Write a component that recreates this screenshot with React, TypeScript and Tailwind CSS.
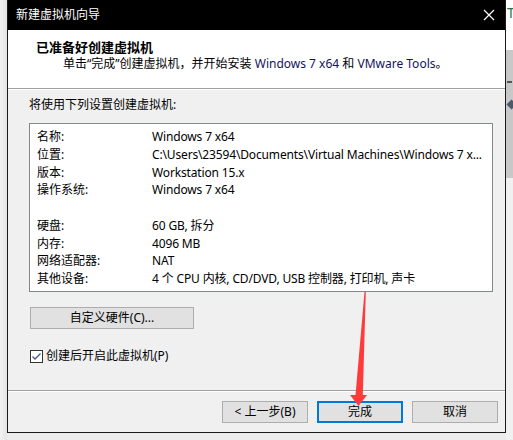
const FONT = "font-['Segoe_UI','Noto_Sans','Noto_Sans_CJK_SC',sans-serif]";

const SETTINGS: { label: string; value: string }[] = [
  { label: "名称:", value: "Windows 7 x64" },
  { label: "位置:", value: "C:\\Users\\23594\\Documents\\Virtual Machines\\Windows 7 x..." },
  { label: "版本:", value: "Workstation 15.x" },
  { label: "操作系统:", value: "Windows 7 x64" },
  { label: "", value: "" },
  { label: "硬盘:", value: "60 GB, 拆分" },
  { label: "内存:", value: "4096 MB" },
  { label: "网络适配器:", value: "NAT" },
  { label: "其他设备:", value: "4 个 CPU 内核, CD/DVD, USB 控制器, 打印机, 声卡" },
];

function WinButton({ children, primary, className = "" }: { children: React.ReactNode; primary?: boolean; className?: string }) {
  return (
    <div
      className={
        "h-[22px] flex items-center justify-center bg-[#e1e1e1] text-[12px] text-black " +
        (primary ? "border-2 border-[#0078d7] " : "border border-[#adadad] ") +
        className
      }
    >
      {children}
    </div>
  );
}

function Arrow() {
  // red pointer drawn over the dialog, aimed at the finish button
  return (
    <svg className="absolute left-0 top-0 pointer-events-none" width="513" height="440">
      <polygon
        points="364.5,292 365.8,292 362.8,395 367,395 358.5,406 350,395 355.5,395"
        fill="#ff3a3a"
      />
    </svg>
  );
}

export default function App() {
  return (
    <div className={`relative w-[513px] h-[440px] overflow-hidden bg-[#ececec] flex ${FONT}`}>
      {/* desktop shadow on the left */}
      <div className="w-[7px] h-full bg-gradient-to-r from-[#f2f2f2] to-[#e4e4e4]" />

      {/* dialog window */}
      <div className="w-[499px] h-[433px] flex flex-col border-l border-r border-b border-[#1a1a1a] bg-[#f0f0f0]">
        <div className="h-[30px] bg-black flex items-center justify-between pl-2 pr-[8px] shrink-0">
          <span className="text-white text-[12px]">新建虚拟机向导</span>
          <svg width="12" height="12" viewBox="0 0 12 12" className="mr-[2px]">
            <path d="M1 1L11 11M11 1L1 11" stroke="white" strokeWidth="1.2" />
          </svg>
        </div>

        <div className="h-[58px] bg-white shrink-0 pl-7 pt-[8px]">
          <div className="text-[13px] font-bold leading-[18px] text-black">已准备好创建虚拟机</div>
          <div className="pl-[27px] text-[12px] leading-[16px] text-black">
            单击“完成”创建虚拟机，并开始安装 <span className="text-[#14145a]">Windows 7 x64</span> 和{" "}
            <span className="text-[#14145a]">VMware Tools</span>。
          </div>
        </div>
        <div className="h-px bg-[#a0a0a0] shrink-0" />
        <div className="h-px bg-white shrink-0" />

        <div className="flex-1 flex flex-col pl-[21px] pr-[12px]">
          <div className="text-[12px] leading-[16px] text-black mt-[7px]">将使用下列设置创建虚拟机:</div>

          <div className="mt-[10px] h-[169px] border border-[#828790] bg-white pl-[7px] pt-[4px]">
            {SETTINGS.map((s, i) => (
              <div key={i} className="flex h-[17.8px] items-center text-[12px] text-black whitespace-nowrap">
                <span className="w-[115px] shrink-0">{s.label}</span>
                <span className="tracking-[-0.15px]">{s.value}</span>
              </div>
            ))}
          </div>

          <WinButton className="mt-[15px] w-[164px] ml-px">自定义硬件(C)...</WinButton>

          <div className="mt-[18px] flex items-center gap-[3px] ml-px">
            <div className="w-[13px] h-[13px] border border-[#333] bg-white flex items-center justify-center">
              <svg width="11" height="11" viewBox="0 0 11 11">
                <path d="M1.5 5.5L4 8L9.5 2.5" fill="none" stroke="#3b5a8a" strokeWidth="1.3" />
              </svg>
            </div>
            <span className="text-[12px] text-black">创建后开启此虚拟机(P)</span>
          </div>
        </div>

        <div className="h-px bg-[#a0a0a0] shrink-0" />
        <div className="h-px bg-white shrink-0" />
        <div className="h-[40px] shrink-0 flex justify-end gap-[9px] pr-[7px] pt-[9px]">
          <WinButton className="w-[86px]">&lt; 上一步(B)</WinButton>
          <WinButton primary className="w-[86px]">完成</WinButton>
          <WinButton className="w-[86px]">取消</WinButton>
        </div>
      </div>

      {/* sliver of the app behind the dialog */}
      <div className="w-[7px] h-full flex flex-col">
        <div className="h-[50px] bg-white text-[#1a7a4a] text-[14px] leading-[26px] pl-[1px]">T</div>
        <div className="h-[128px] bg-[#c8c8c8] relative">
          <div className="mt-[31px] w-[5px] h-[2px] bg-[#555] ml-[1px]" />
          <div className="mt-[18px] w-[7px] h-[7px] bg-[#4a5a6a] rotate-45 ml-[2px]" />
        </div>
        <div className="flex-1 bg-[#f0f0f0]" />
      </div>

      <Arrow />
    </div>
  );
}
